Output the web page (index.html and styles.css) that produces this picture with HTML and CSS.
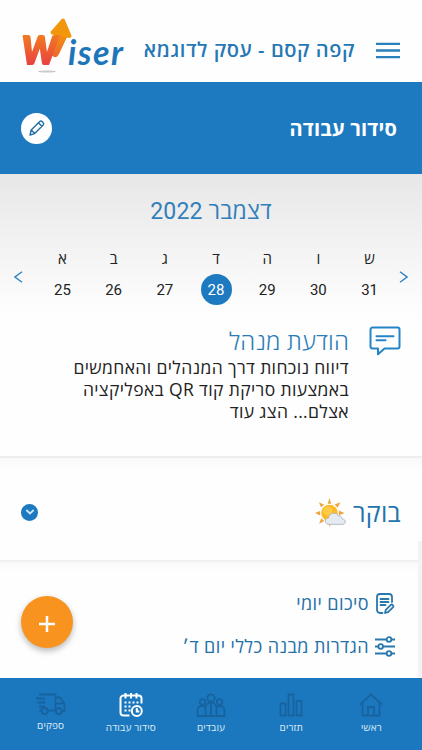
FILE: index.html
```html
<!DOCTYPE html>
<html lang="he" dir="rtl">
<head>
  <meta charset="UTF-8">
  <meta name="viewport" content="width=device-width, initial-scale=1.0">
  <title>Wiser - סידור עבודה</title>
  <link rel="stylesheet" href="styles.css">
</head>
<body>

<header class="header">
  <svg class="menu-icon" viewBox="0 0 24 17" stroke="#2a7fbd" stroke-width="2.3">
    <path d="M0 1.8h24M0 8.5h24M0 15.2h24"/>
  </svg>
  <h1 class="business">קפה קסם - עסק לדוגמא</h1>
  <svg class="logo" viewBox="0 0 106 58" direction="ltr">
    <defs>
      <linearGradient id="fire" x1="0" y1="0" x2="0" y2="1">
        <stop offset="0.3" stop-color="#f3831c"/>
        <stop offset="0.8" stop-color="#e9453f"/>
      </linearGradient>
      <linearGradient id="shaft" gradientUnits="userSpaceOnUse" x1="0" y1="14" x2="0" y2="48">
        <stop offset="0" stop-color="#f2960c"/>
        <stop offset="1" stop-color="#ec5a38"/>
      </linearGradient>
    </defs>
    <ellipse cx="27" cy="54.500" rx="9" ry="1" fill="#c9c9c9"/>
    <path d="M35 36 45 15" stroke="url(#shaft)" stroke-width="8" stroke-linecap="round"/>
    <path d="M32.500 15.500 43 3.500 49.500 19Z" fill="#f2960c" stroke="#f2960c" stroke-width="4" stroke-linejoin="round"/>
    <text class="logo-w" x="2" y="47" textLength="36" lengthAdjust="spacingAndGlyphs" fill="url(#fire)" stroke="url(#fire)">w</text>
    <text class="logo-iser" x="48" y="48" textLength="55" lengthAdjust="spacing">iser</text>
  </svg>
</header>

<section class="title-bar">
  <h2>סידור עבודה</h2>
  <button class="edit">
    <svg viewBox="0 0 18 18" fill="none" stroke="#236ea4" stroke-width="1.4" stroke-linejoin="round">
      <path d="M2 16l1.2-5L12 2.3c1.300-1.100 4.600 2 3.400 3.500L6.700 14.600zM3.200 11l3.500 3.600M10.500 3.800l3.500 3.600"/>
    </svg>
  </button>
</section>

<section class="calendar" dir="ltr">
  <h2 dir="rtl">דצמבר 2022</h2>
  <div class="week">
    <svg class="arrow" viewBox="0 0 9 12"><path d="M8 .8 1 6l7 5.200"/></svg>
    <div class="days">
      <div class="day"><span>א</span><b>25</b></div>
      <div class="day"><span>ב</span><b>26</b></div>
      <div class="day"><span>ג</span><b>27</b></div>
      <div class="day active"><span>ד</span><b>28</b></div>
      <div class="day"><span>ה</span><b>29</b></div>
      <div class="day"><span>ו</span><b>30</b></div>
      <div class="day"><span>ש</span><b>31</b></div>
    </div>
    <svg class="arrow" viewBox="0 0 9 12"><path d="M1 .8 8 6l-7 5.200"/></svg>
  </div>
</section>

<section class="message">
  <svg class="message-icon" viewBox="0 0 32 30" fill="none" stroke="#2484c8" stroke-width="2" stroke-linejoin="round" stroke-linecap="round">
    <path d="M3.500 1.500h25a2 2 0 0 1 2 2v17a2 2 0 0 1-2 2H15.500L9 28.300v-5.800H3.500a2 2 0 0 1-2-2v-17a2 2 0 0 1 2-2zM7.500 10.200h17M7.500 14.200h9"/>
  </svg>
  <div>
    <h3>הודעת מנהל</h3>
    <p>דיווח נוכחות דרך המנהלים והאחמשים<br>באמצעות סריקת קוד QR באפליקציה<br>אצלם... הצג עוד</p>
  </div>
</section>

<section class="shift">
  <h3>בוקר</h3>
  <svg class="sun" viewBox="0 0 30 28">
    <g fill="#eda540">
      <path d="M12.300 5.500 14 0l1.700 5.500zM5.800 9 3.800 4.200 8.900 6.400zM19 6.200 24.500 4 22 9.300zM5 12.500 0 14.600l5 2.200zM23 12l5.500 2.400L23 17zM6 19.500 4 25l5-2.700zM12.500 23l1.700 5 1.700-5z"/>
    </g>
    <circle cx="14" cy="14.500" r="8" fill="#fdb827"/>
    <circle cx="12.500" cy="12.500" r="4.500" fill="#fecb45"/>
    <path d="M14 25.500c-5.500 0-5-6-.8-6.200 0-5.300 8.200-6.300 9.500-1.800 3-.7 3.500 2 3.400 2.600 4.500.4 4.200 5.400.3 5.400z" fill="#e6eaf1" stroke="#adb3c0" stroke-width=".8"/>
  </svg>
  <button class="toggle">
    <svg viewBox="0 0 10 6"><path d="M1.300 1 5 4.500 8.700 1"/></svg>
  </button>
</section>

<section class="links">
  <a class="summary">
    <svg viewBox="0 0 20 21" fill="none" stroke="#2877ad" stroke-width="1.800" stroke-linecap="round" stroke-linejoin="round">
      <path d="M7.500 20H5a3 3 0 0 1-3-3V4a3 3 0 0 1 3-3h9a3 3 0 0 1 3 3v5M5.500 6h8M5.500 9h8M5.500 12h5M10 20l.8-3.200 5-5c1.200-1 3.300 1.100 2.300 2.300l-5 5z"/>
    </svg>
    <span>סיכום יומי</span>
  </a>
  <a class="settings">
    <svg viewBox="0 0 20 20" fill="none" stroke="#2877ad" stroke-width="1.800">
      <path d="M0 3h11.500M16.500 3H20M0 10h3.200M8.200 10H20M0 17h11.500M16.500 17H20"/>
      <circle cx="14" cy="3" r="2.300"/><circle cx="5.700" cy="10" r="2.300"/><circle cx="14" cy="17" r="2.300"/>
    </svg>
    <span>הגדרות מבנה כללי יום ד׳</span>
  </a>
  <button class="add">
    <svg viewBox="0 0 16 16"><path d="M8 0v16M0 8h16"/></svg>
  </button>
</section>

<nav class="nav">
  <a>
    <svg viewBox="0 0 24 24"><path d="M1 11.500 12 1.500l11 10M3.500 9.500V22.500h17V9.500M9 22.500v-8.500h6v8.500"/></svg>
    <span>ראשי</span>
  </a>
  <a>
    <svg viewBox="0 0 24 24"><path d="M1.500 10.500h5v12h-5zM9.500 1.500h5v21h-5zM17.500 8h5v14.500h-5z"/></svg>
    <span>תזרים</span>
  </a>
  <a>
    <svg class="wide" viewBox="0 0 30 24"><circle cx="15" cy="5" r="3.700"/><circle cx="6.500" cy="9" r="2.800"/><circle cx="23.500" cy="9" r="2.800"/><path d="M9.500 23V15c0-7 11-7 11 0v8zM9.500 23h-8v-5.500c0-5 5-5.500 8-3M20.500 23h8v-5.500c0-5-5-5.500-8-3M15 11v11"/></svg>
    <span>עובדים</span>
  </a>
  <a class="active">
    <svg viewBox="0 0 24 24"><path d="M10.500 22.500H4.500a3 3 0 0 1-3-3v-14a3 3 0 0 1 3-3h15a3 3 0 0 1 3 3v5M6.500 0v5.500M12 0v5.500M17.500 0v5.500M17.800 15v3.500h2.500"/><circle cx="17.800" cy="18" r="5"/><path class="dots" d="M5.500 9.500h14M5.500 13.500h8M5.500 17.500h6"/></svg>
    <span>סידור עבודה</span>
  </a>
  <a class="suppliers">
    <svg class="wide" viewBox="0 0 30 22"><path d="M3 1.500h16.500V17.500M19.500 4.500h4.500l4.500 6v7.500h-2.500M19.500 10.500h8M5 17.500H3.500M12.500 17.500h7M0 5.500h9M1.500 9.500h8M3 13.500h6"/><circle cx="8.700" cy="18" r="3"/><circle cx="22.800" cy="18" r="3"/></svg>
    <span>ספקים</span>
  </a>
</nav>

</body>
</html>
```

FILE: styles.css
```css
* {
  box-sizing: border-box;
}

body {
  margin: 0;
  height: 750px;
  overflow: hidden;
  display: flex;
  flex-direction: column;
  background: #fefefe;
  color: #222;
  font-family: "Open Sans", "Noto Sans", sans-serif;
}

h1, h2, h3, p {
  margin: 0;
  font-weight: 400;
  white-space: nowrap;
}

button {
  border: 0;
  padding: 0;
  display: flex;
  align-items: center;
  justify-content: center;
}

.header {
  height: 82px;
  flex: none;
  display: flex;
  align-items: center;
  padding: 18px 22px 0 20px;
}

.menu-icon {
  width: 24px;
  height: 17px;
}

.business {
  margin-right: 21px;
  font-size: 20px;
  line-height: 26px;
  font-weight: 600;
  letter-spacing: 0.6px;
  color: #2678b5;
}

.logo {
  width: 106px;
  height: 58px;
  margin-right: auto;
  margin-top: -8px;
  overflow: visible;
}

.logo-w {
  font: italic 700 54px Lato, "Open Sans", sans-serif;
  stroke-width: 2;
  stroke-linejoin: round;
}

.logo-iser {
  font: italic 700 34px Lato, "Open Sans", sans-serif;
  fill: #1d76b9;
}

.title-bar {
  height: 92px;
  flex: none;
  display: flex;
  align-items: center;
  justify-content: space-between;
  padding: 0 25px 0 21px;
  background: #1e7ac0;
}

.title-bar h2 {
  font-size: 20px;
  font-weight: 700;
  letter-spacing: 0.2px;
  color: #fff;
}

.edit {
  width: 31px;
  height: 31px;
  border-radius: 50%;
  background: #fff;
}

.edit svg {
  width: 18px;
  height: 18px;
}

.calendar {
  height: 141px;
  flex: none;
  padding-top: 23px;
  background: linear-gradient(#e7e7e7, #fefefe);
}

.calendar h2 {
  text-align: center;
  font-size: 23px;
  line-height: 30px;
  letter-spacing: 0.2px;
  color: #327fba;
  font-family: Roboto, "Open Sans", sans-serif;
}

.week {
  display: flex;
  align-items: center;
  justify-content: space-between;
  padding: 0 14px;
  margin-top: 21px;
}

.arrow {
  width: 9px;
  height: 12px;
  margin-top: 1px;
  fill: none;
  stroke: #2f83c2;
  stroke-width: 1.4;
}

.days {
  display: grid;
  grid-template-columns: repeat(7, 51.2px);
  margin-left: 10px;
}

.day {
  display: flex;
  flex-direction: column;
  align-items: center;
  font: 15px/22px Roboto, "Open Sans", sans-serif;
}

.day b {
  width: 31px;
  height: 31px;
  margin-top: 4px;
  line-height: 32px;
  text-align: center;
  font-weight: 400;
  border-radius: 50%;
}

.day.active b {
  background: #1e7ac0;
  color: #fff;
}

.message {
  height: 143px;
  flex: none;
  display: flex;
  align-items: flex-start;
  padding: 11px 21px 0 0;
  border-bottom: 2px solid #eee;
}

.message-icon {
  width: 32px;
  height: 30px;
  margin-left: 20px;
}

.message h3 {
  font-size: 24px;
  line-height: 30px;
  font-weight: 300;
  letter-spacing: 0.2px;
  color: #2a7cb9;
}

.message p {
  font-size: 17.5px;
  line-height: 22px;
  letter-spacing: 0.37px;
}

.shift {
  height: 104px;
  flex: none;
  display: flex;
  align-items: center;
  padding: 6px 21px 0 21px;
  background: linear-gradient(#f8f8f8, #fefefe 12px);
  border-bottom: 2px solid #f0f0f0;
}

.shift h3 {
  font-size: 25px;
  letter-spacing: 0.3px;
  color: #2373ac;
}

.sun {
  width: 31px;
  height: 29px;
  margin-right: 7px;
}

.toggle {
  width: 17px;
  height: 17px;
  margin-right: auto;
  border-radius: 50%;
  background: #1e7ac0;
}

.toggle svg {
  width: 10px;
  height: 6px;
  fill: none;
  stroke: #cfe8fa;
  stroke-width: 1.8;
}

.links {
  position: relative;
  flex: 1;
  padding: 28px 27px 0 0;
  background: linear-gradient(#f9f9f9, #fefefe 10px);
}

/* scrollbar thumb */
.links::after {
  content: "";
  position: absolute;
  top: -21px;
  right: 0;
  bottom: 0;
  width: 4px;
  background: #f3f3f3;
}

.links a {
  height: 26px;
  display: flex;
  align-items: center;
  gap: 6px;
  font-size: 18px;
  letter-spacing: 0.4px;
  color: #2471a8;
  white-space: nowrap;
}

.links a + a {
  margin-top: 17px;
}

.links a svg {
  width: 20px;
  height: 21px;
}

.add {
  position: absolute;
  left: 21px;
  bottom: 30px;
  width: 52px;
  height: 52px;
  border-radius: 50%;
  background: #f7931e;
  box-shadow: 0 3px 6px rgba(0, 0, 0, 0.28);
}

.add svg {
  width: 16px;
  height: 16px;
  margin-top: 3px;
  stroke: #fff;
  stroke-width: 2.5;
}

.nav {
  height: 72px;
  flex: none;
  display: grid;
  grid-template-columns: repeat(5, 80.2px);
  justify-content: center;
  padding-top: 15px;
  background: #1c78be;
}

.nav a {
  display: flex;
  flex-direction: column;
  align-items: center;
  font-size: 10px;
  line-height: 14px;
  letter-spacing: 0.15px;
  color: #dcecf8;
}

.nav svg {
  width: 24px;
  height: 24px;
  margin-bottom: 3px;
  fill: none;
  stroke: #17639f;
  stroke-width: 1.8;
}

.nav svg.wide {
  width: 30px;
}

.nav .active svg {
  stroke: #fff;
  stroke-width: 2;
}

.nav .active .dots {
  stroke-dasharray: 2 2;
}

.nav .suppliers svg {
  height: 22px;
}
```
